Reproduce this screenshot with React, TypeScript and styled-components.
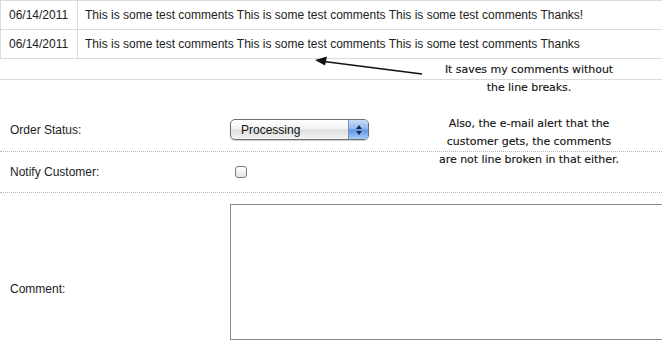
import styled, { createGlobalStyle } from 'styled-components'

const GlobalStyle = createGlobalStyle`
  html, body {
    margin: 0;
    padding: 0;
    background: #fff;
    overflow: hidden;
  }
  body {
    font-family: "Liberation Sans", Arial, sans-serif;
    font-size: 12px;
    color: #222;
  }
`

const Page = styled.div`
  position: relative;
  width: 662px;
  height: 340px;
  overflow: hidden;
`

const History = styled.table`
  width: 700px;
  border-collapse: collapse;
  margin: 0;
`

const Cell = styled.td<{ $date?: boolean }>`
  border: 1px solid #dcdcdc;
  height: 28px;
  padding: 0 0 0 ${(p) => (p.$date ? '8px' : '7px')};
  width: ${(p) => (p.$date ? '68px' : 'auto')};
  white-space: nowrap;
  vertical-align: middle;
`

const Gap = styled.div`
  height: 20px;
  border-bottom: 1px solid #dcdcdc;
`

const Row = styled.div<{ $top: number; $bottom: number; $dotted?: boolean }>`
  display: grid;
  grid-template-columns: 230px 1fr;
  align-items: center;
  padding: ${(p) => `${p.$top}px 0 ${p.$bottom}px`};
  border-bottom: ${(p) => (p.$dotted ? '1px dotted #b8b8b8' : 'none')};
`

const Label = styled.div<{ $offset?: number }>`
  padding-left: 10px;
  align-self: ${(p) => (p.$offset ? 'start' : 'center')};
  padding-top: ${(p) => p.$offset ?? 0}px;
`

const SelectBox = styled.div`
  width: 137px;
  height: 19px;
  border: 1px solid #6f6f6f;
  border-radius: 5px;
  display: flex;
  overflow: hidden;
  background: linear-gradient(#ffffff 0%, #f2f2f2 45%, #dedede 55%, #f4f4f4 100%);
  box-shadow: 0 1px 1px rgba(0, 0, 0, 0.2);
`

const SelectText = styled.span`
  flex: 1;
  padding-left: 10px;
  line-height: 20px;
  font-size: 12px;
  color: #111;
`

const SelectArrows = styled.span`
  width: 19px;
  border-left: 1px solid #7b8fb8;
  background: linear-gradient(#c9ddf7 0%, #8db6ee 48%, #5e95e3 52%, #a7cbf7 100%);
  display: flex;
  flex-direction: column;
  align-items: center;
  justify-content: center;
  gap: 2px;
`

const Tri = styled.span<{ $down?: boolean }>`
  width: 0;
  height: 0;
  border-left: 3px solid transparent;
  border-right: 3px solid transparent;
  ${(p) => (p.$down ? 'border-top: 4px solid #1d2a44;' : 'border-bottom: 4px solid #1d2a44;')}
`

const CheckBox = styled.span`
  display: block;
  margin-left: 5px;
  width: 10px;
  height: 10px;
  border: 1px solid #7a7a7a;
  border-radius: 3px;
  background: linear-gradient(#ffffff, #e4e4e4);
`

const TextArea = styled.textarea`
  display: block;
  width: 460px;
  height: 134px;
  margin: 0;
  padding: 0;
  border: 1px solid #8a8a8a;
  resize: none;
  font-family: "Liberation Sans", Arial, sans-serif;
`

const Note = styled.div`
  position: absolute;
  left: 419px;
  top: 61px;
  width: 220px;
  text-align: center;
  font-family: "DejaVu Sans", Verdana, sans-serif;
  font-size: 11px;
  letter-spacing: -0.05px;
  line-height: 18px;
  color: #111;
  -webkit-text-stroke: 0.12px #111;
`

const NoteGap = styled.div`
  height: 18px;
`

const Arrow = styled.svg`
  position: absolute;
  left: 310px;
  top: 52px;
`

const comments = [
  'This is some test comments This is some test comments This is some test comments Thanks!',
  'This is some test comments This is some test comments This is some test comments Thanks',
]

export default function App() {
  return (
    <Page>
      <GlobalStyle />
      <History>
        <tbody>
          {comments.map((c, i) => (
            <tr key={i}>
              <Cell $date>06/14/2011</Cell>
              <Cell>{c}</Cell>
            </tr>
          ))}
        </tbody>
      </History>
      <Gap />
      <Row $top={39} $bottom={11} $dotted>
        <Label>Order Status:</Label>
        <SelectBox>
          <SelectText>Processing</SelectText>
          <SelectArrows>
            <Tri />
            <Tri $down />
          </SelectArrows>
        </SelectBox>
      </Row>
      <Row $top={13} $bottom={13} $dotted>
        <Label>Notify Customer:</Label>
        <CheckBox />
      </Row>
      <Row $top={11} $bottom={0}>
        <Label $offset={78}>Comment:</Label>
        <TextArea />
      </Row>
      <Arrow width="120" height="30" viewBox="0 0 120 30">
        <line x1="14" y1="9.5" x2="112" y2="22" stroke="#111" strokeWidth="1.6" />
        <polygon points="5,8 17,4.5 15,13.5" fill="#111" />
      </Arrow>
      <Note>
        <div>It saves my comments without</div>
        <div>the line breaks.</div>
        <NoteGap />
        <div>Also, the e-mail alert that the</div>
        <div>customer gets, the comments</div>
        <div>are not line broken in that either.</div>
      </Note>
    </Page>
  )
}
